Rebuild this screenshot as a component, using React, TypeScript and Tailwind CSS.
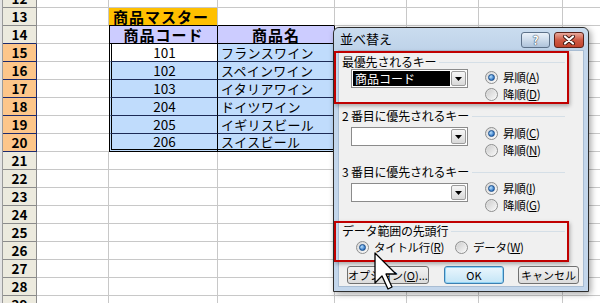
import React from 'react';

const DATA: Record<number, [string, string]> = {
  15: ['101', 'フランスワイン'],
  16: ['102', 'スペインワイン'],
  17: ['103', 'イタリアワイン'],
  18: ['204', 'ドイツワイン'],
  19: ['205', 'イギリスビール'],
  20: ['206', 'スイスビール'],
};

const ROWS = [12, 13, 14, 15, 16, 17, 18, 19, 20, 21, 22, 23, 24, 25, 26, 27, 28, 29];

function SheetRow({ n }: { n: number }) {
  const hl = n >= 15 && n <= 20;
  const inTable = n >= 14 && n <= 20;
  const data = DATA[n];

  let bCls = 'w-[109px] border-r border-b border-[#c8c8c8]';
  let cCls = 'w-[117px] border-r border-b border-[#c8c8c8]';
  let bText: React.ReactNode = null;
  let cText: React.ReactNode = null;

  if (n === 13) {
    bCls = 'w-[109px] bg-[#ffc000] border-r border-r-[#c8c8c8] border-b border-b-black pl-[4px] text-[15px] font-bold tracking-[1px]';
    bText = '商品マスター';
    cCls = 'w-[117px] border-r border-b border-r-[#c8c8c8] border-b-black';
  } else if (n === 14) {
    bCls = 'w-[109px] bg-[#ccccff] border-l border-r border-b border-black justify-center text-[15px] font-bold tracking-[1px]';
    bText = '商品コード';
    cCls = 'w-[117px] bg-[#ccccff] border-r border-b border-black justify-center text-[15px] font-bold tracking-[1px]';
    cText = '商品名';
  } else if (data) {
    const last = n === 20;
    bCls = `w-[109px] ${n === 15 ? 'bg-white' : 'bg-[#c0dcfc]'} border-l-[3px] border-double border-l-black border-r border-r-black justify-center text-[13.5px] ${
      last ? 'border-b-[3px] border-b-black' : 'border-b border-b-[#1c2a55]'
    }`;
    bText = data[0];
    cCls = `w-[117px] bg-[#c0dcfc] border-r border-r-black pl-[3px] text-[13px] tracking-[0.3px] ${
      last ? 'border-b-[3px] border-double border-b-black' : 'border-b border-b-[#1c2a55]'
    }`;
    cText = data[1];
  }

  return (
    <div className={`flex h-[18px] shrink-0 ${n === 12 ? '-mt-[10px]' : ''}`}>
      <div className="w-[3px] bg-[#e4e4e4] border-r border-[#9a9a9a]" />
      <div
        className={`w-[34px] flex items-center justify-center text-[13.5px] leading-none font-semibold border-r border-b ${
          hl
            ? 'bg-[#fdc68a] border-r-[#1c2a6e] border-b-[#1c2a6e]'
            : n === 14
              ? 'bg-[#eceade] border-r-[#8c8c8c] border-b-[#1c2a6e]'
              : 'bg-[#eceade] border-[#8c8c8c]'
        }`}
      >
        {n}
      </div>
      <div className={`w-[72px] border-b border-[#c8c8c8] ${inTable ? '' : 'border-r'}`} />
      <div className={`flex items-center leading-none ${bCls}`}>{bText}</div>
      <div className={`flex items-center leading-none ${cCls}`}>{cText}</div>
      <div className="w-[72px] border-r border-b border-[#c8c8c8]" />
      <div className="w-[72px] border-r border-b border-[#c8c8c8]" />
      <div className="w-[84px] border-r border-b border-[#c8c8c8]" />
      <div className="flex-1 border-b border-[#c8c8c8]" />
    </div>
  );
}

function Radio({ checked }: { checked?: boolean }) {
  return (
    <span className="inline-flex w-[13px] h-[13px] shrink-0 rounded-full border border-[#8e8f8f] bg-gradient-to-br from-[#d8d8d8] to-[#fbfbfb] items-center justify-center">
      {checked ? (
        <span className="w-[7px] h-[7px] rounded-full border border-[#1b4f8c] bg-[radial-gradient(circle_at_35%_35%,#b9e2ff,#2a6fc0_75%)]" />
      ) : (
        <span className="w-[9px] h-[9px] rounded-full bg-gradient-to-br from-[#cfcfcf] to-[#f6f6f6]" />
      )}
    </span>
  );
}

function RadioItem({ checked, text, k }: { checked?: boolean; text: string; k: string }) {
  return (
    <div className="flex items-center h-[17px] gap-[5px] text-[11.5px] tracking-[-0.3px] whitespace-nowrap">
      <Radio checked={checked} />
      <span>
        {text}(<span className="underline">{k}</span>)
      </span>
    </div>
  );
}

function Combo({ value, className = '' }: { value?: string; className?: string }) {
  return (
    <div className={`flex w-[117px] h-[19px] border border-[#8b8b8b] bg-white p-[1px] ${className}`}>
      <div className={`flex-1 flex items-center pl-[2px] text-[12px] ${value ? 'bg-black text-white' : ''}`}>{value}</div>
      <div className="w-[15px] ml-[1px] border border-[#9c9c9c] rounded-[2px] bg-gradient-to-b from-[#f7f7f7] to-[#d9d9d9] flex items-center justify-center">
        <svg width="7" height="4" viewBox="0 0 7 4">
          <path d="M0 0h7L3.5 4z" fill="#000" />
        </svg>
      </div>
    </div>
  );
}

function GroupLabel({ text, className = '' }: { text: string; className?: string }) {
  return (
    <div className={`flex items-center h-[14px] pl-[6px] pr-[2px] gap-[3px] text-[12px] tracking-[-0.2px] ${className}`}>
      <span className="whitespace-nowrap">{text}</span>
      <div className="flex-1 h-px bg-[#d5dfe7]" />
    </div>
  );
}

function Dialog() {
  return (
    <div className="absolute left-[333px] top-[27px] w-[256px] h-[265px] border border-[#2e2e2e] rounded-t-[6px] bg-[#c3d6eb] shadow-[2px_2px_6px_rgba(0,0,0,0.35)] text-[11px] text-black">
      <div className="flex items-center h-[22px] pl-[6px] pr-[4px] rounded-t-[6px] bg-gradient-to-b from-[#cadcef] to-[#bfd3e9]">
        <span className="text-[13px]">並べ替え</span>
        <div className="ml-auto flex gap-[4px] mt-[2px]">
          <div className="w-[29px] h-[16px] rounded-[3px] border border-[#5d7189] bg-gradient-to-b from-[#eaf1f9] via-[#cddbeb] to-[#aec3da] flex items-center justify-center">
            <span className="text-white font-bold text-[12px] leading-none [text-shadow:0_0_1px_#1e2e44,0_0_1px_#1e2e44]">?</span>
          </div>
          <div className="w-[30px] h-[16px] rounded-[3px] border border-[#5a2119] bg-gradient-to-b from-[#e7a89c] via-[#cf5a45] to-[#c0432d] flex items-center justify-center">
            <svg width="14" height="10" viewBox="0 0 14 10">
              <path d="M3 1.5l8 7M11 1.5l-8 7" stroke="#3a1510" strokeWidth="4" strokeLinecap="round" />
              <path d="M3 1.5l8 7M11 1.5l-8 7" stroke="#fff" strokeWidth="2.2" strokeLinecap="round" />
            </svg>
          </div>
        </div>
      </div>

      <div className="mx-[4px] h-[237px] bg-[#f0f0f0] border border-[#a9bdd3] flex flex-col">
        {/* 最優先されるキー */}
        <div className="-ml-[5px] w-[235px] h-[53px] border-2 border-[#c00000] shadow-[1px_2px_4px_rgba(0,0,0,0.3)] flex flex-col">
          <GroupLabel text="最優先されるキー" className="mt-[2px]" />
          <div className="flex pl-[15px]">
            <Combo value="商品コード" />
            <div className="ml-[17px] flex flex-col">
              <RadioItem checked text="昇順" k="A" />
              <RadioItem text="降順" k="D" />
            </div>
          </div>
        </div>

        {/* 2 番目 */}
        <div className="-ml-[5px] w-[235px] h-[57px] border-2 border-transparent flex flex-col">
          <GroupLabel text="2 番目に優先されるキー" className="mt-[3px]" />
          <div className="flex pl-[15px] mt-[2px]">
            <Combo className="mt-[2px]" />
            <div className="ml-[17px] flex flex-col">
              <RadioItem checked text="昇順" k="C" />
              <RadioItem text="降順" k="N" />
            </div>
          </div>
        </div>

        {/* 3 番目 */}
        <div className="-ml-[5px] w-[235px] h-[60px] border-2 border-transparent flex flex-col">
          <GroupLabel text="3 番目に優先されるキー" className="mt-[2px]" />
          <div className="flex pl-[15px] mt-[1px]">
            <Combo className="mt-[3px]" />
            <div className="ml-[17px] flex flex-col">
              <RadioItem checked text="昇順" k="I" />
              <RadioItem text="降順" k="G" />
            </div>
          </div>
        </div>

        {/* データ範囲の先頭行 */}
        <div className="-ml-[5px] w-[235px] h-[41px] border-2 border-[#c00000] shadow-[1px_2px_4px_rgba(0,0,0,0.3)] flex flex-col">
          <GroupLabel text="データ範囲の先頭行" className="mt-[1px]" />
          <div className="flex pl-[20px] mt-[1px]">
            <div className="w-[99px]">
              <RadioItem checked text="タイトル行" k="R" />
            </div>
            <RadioItem text="データ" k="W" />
          </div>
        </div>

        <div className="flex pl-[8px] mt-[4px] gap-[15px] h-[18px] whitespace-nowrap leading-none">
          <div className="w-[82px] rounded-[3px] border border-[#707070] bg-gradient-to-b from-[#f2f2f2] to-[#dcdcdc] flex items-center justify-center">
            オプション(<span className="underline">O</span>)...
          </div>
          <div className="w-[60px] rounded-[3px] border border-[#3c7fb1] bg-gradient-to-b from-[#eaf6fd] to-[#c4e5f6] shadow-[inset_0_0_0_1px_#90d3f5] flex items-center justify-center">
            OK
          </div>
          <div className="w-[61px] -ml-[1px] rounded-[3px] border border-[#707070] bg-gradient-to-b from-[#f2f2f2] to-[#dcdcdc] flex items-center justify-center">
            キャンセル
          </div>
        </div>
      </div>
    </div>
  );
}

export default function App() {
  return (
    <div className="relative w-[600px] h-[303px] overflow-hidden bg-white font-['Noto_Sans_CJK_JP',sans-serif] text-black">
      <div className="flex flex-col">
        {ROWS.map((n) => (
          <SheetRow key={n} n={n} />
        ))}
      </div>
      <Dialog />
      <svg className="absolute left-[374px] top-[252px]" width="24" height="39" viewBox="0 0 24 39">
        <path d="M1 1L1 31L8 24L14 37L18 35L12 22L22 22Z" fill="#fff" stroke="#000" strokeWidth="1.3" strokeLinejoin="round" />
      </svg>
    </div>
  );
}
